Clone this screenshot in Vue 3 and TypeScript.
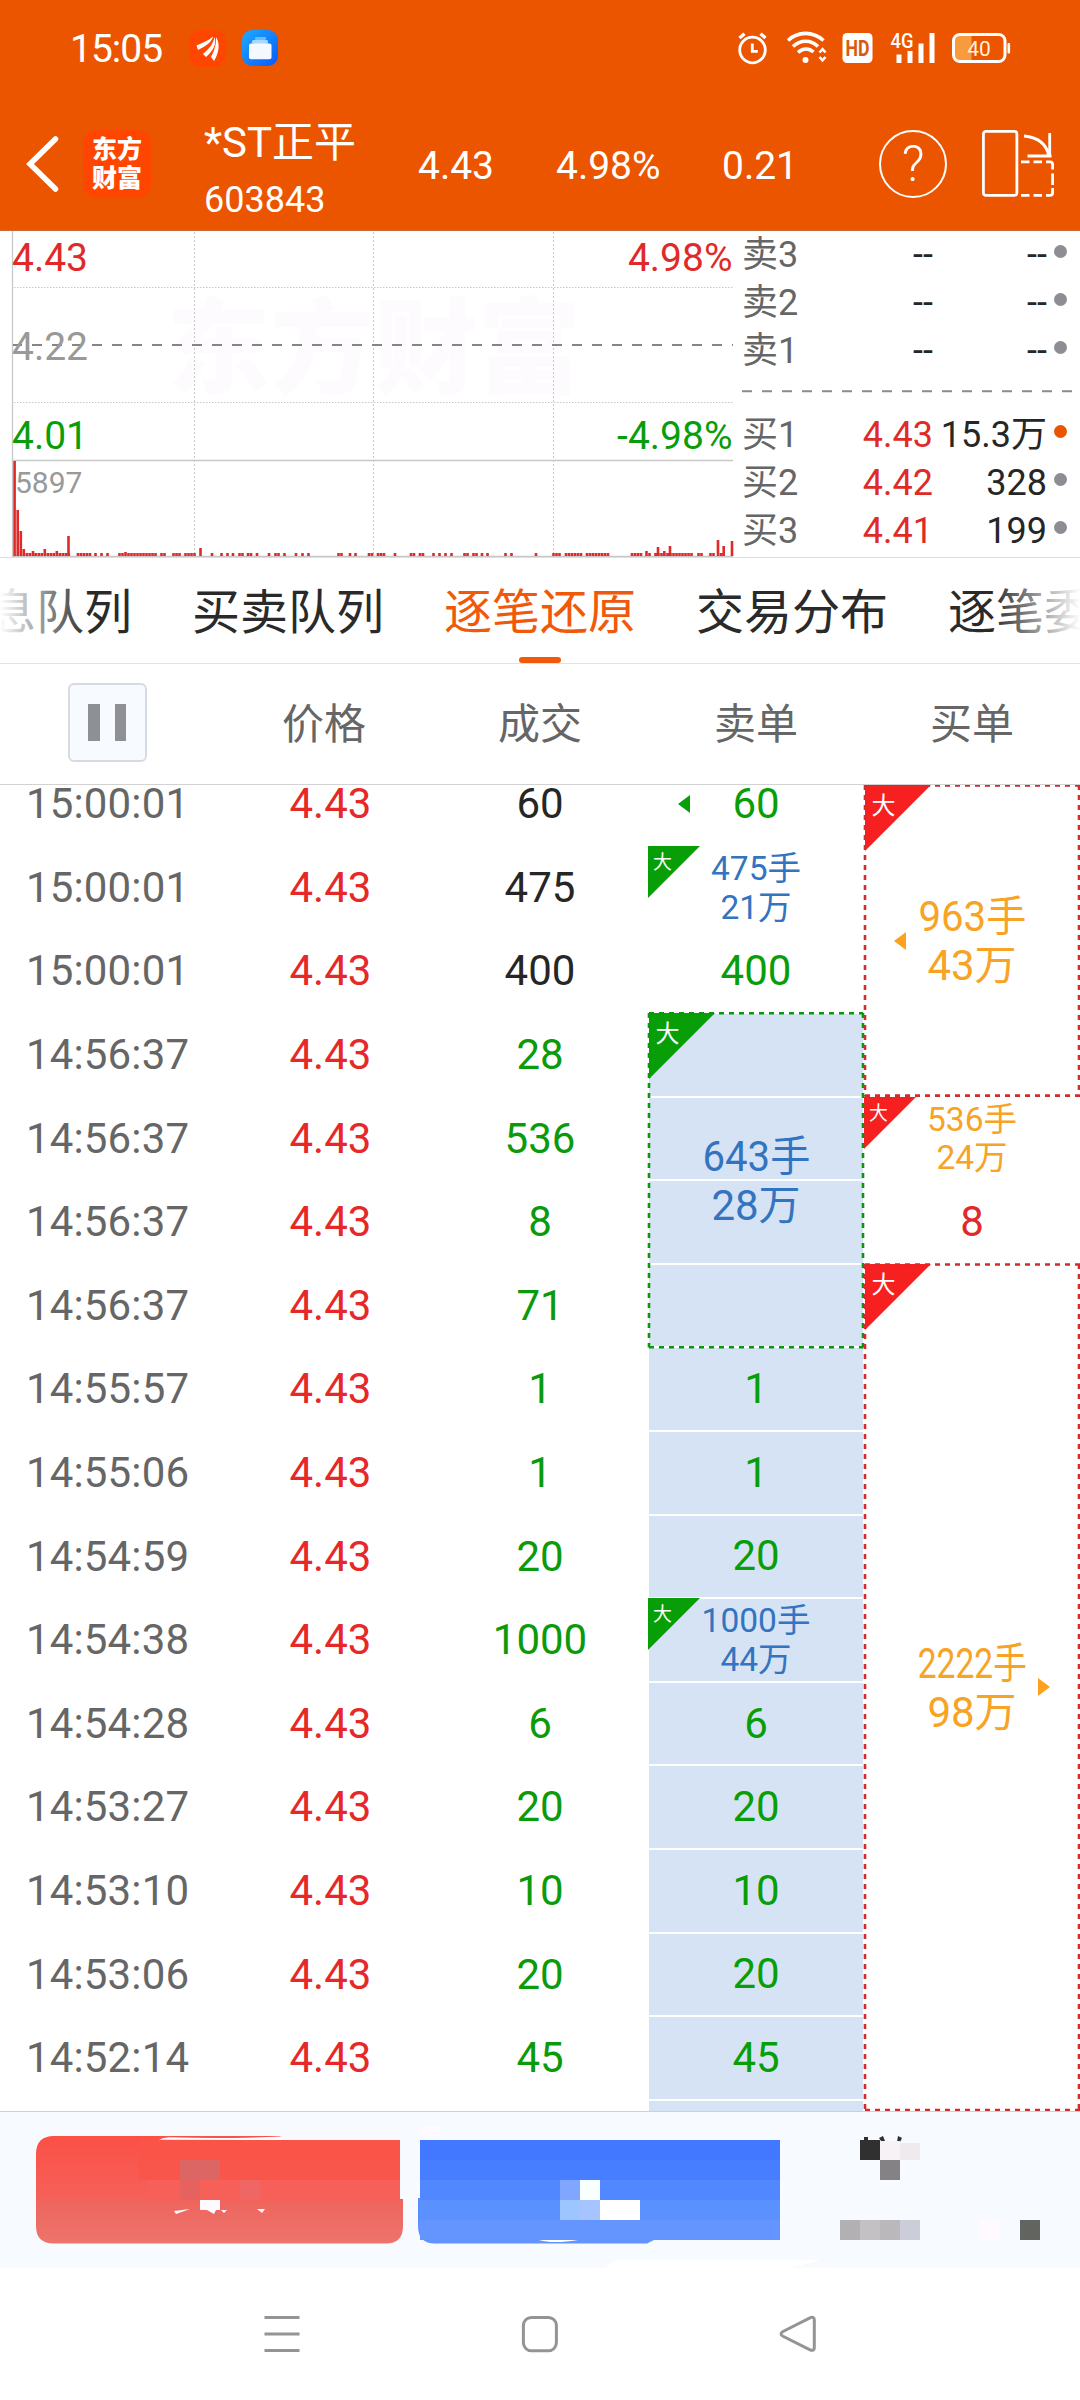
<script setup lang="ts">
type Tone = 'dark' | 'green'
interface Trade { time: string; price: string; volume: string; tone: Tone }
interface Block { span: number; kind: 'plain' | 'big' | 'box' | 'fill'; lots?: string; amount?: string; arrow?: 'left' | 'right'; squeeze?: number }

const ROW = 83.62
const CLIP = 22.9

const quotes = [
  { label: '卖3', price: '--', volume: '--', hot: false },
  { label: '卖2', price: '--', volume: '--', hot: false },
  { label: '卖1', price: '--', volume: '--', hot: false },
  { label: '买1', price: '4.43', volume: '15.3万', hot: true },
  { label: '买2', price: '4.42', volume: '328', hot: false },
  { label: '买3', price: '4.41', volume: '199', hot: false },
]
const asks = quotes.slice(0, 3)
const bids = quotes.slice(3)

const tabs = ['息队列', '买卖队列', '逐笔还原', '交易分布', '逐笔委']
const heads = ['价格', '成交', '卖单', '买单']

const rows: [string, string, Tone][] = [
  ['15:00:01', '60', 'dark'], ['15:00:01', '475', 'dark'], ['15:00:01', '400', 'dark'],
  ['14:56:37', '28', 'green'], ['14:56:37', '536', 'green'], ['14:56:37', '8', 'green'],
  ['14:56:37', '71', 'green'], ['14:55:57', '1', 'green'], ['14:55:06', '1', 'green'],
  ['14:54:59', '20', 'green'], ['14:54:38', '1000', 'green'], ['14:54:28', '6', 'green'],
  ['14:53:27', '20', 'green'], ['14:53:10', '10', 'green'], ['14:53:06', '20', 'green'],
  ['14:52:14', '45', 'green'],
]
const trades: Trade[] = rows.map(([time, volume, tone]) => ({ time, volume, tone, price: '4.43' }))

const sells: Block[] = [
  { span: 1, kind: 'plain', lots: '60', arrow: 'left' },
  { span: 1, kind: 'big', lots: '475手', amount: '21万' },
  { span: 1, kind: 'plain', lots: '400' },
  { span: 4, kind: 'box', lots: '643手', amount: '28万', squeeze: 0.955 },
  { span: 1, kind: 'fill', lots: '1' },
  { span: 1, kind: 'fill', lots: '1' },
  { span: 1, kind: 'fill', lots: '20' },
  { span: 1, kind: 'fill', lots: '1000手', amount: '44万' },
  { span: 1, kind: 'fill', lots: '6' },
  { span: 1, kind: 'fill', lots: '20' },
  { span: 1, kind: 'fill', lots: '10' },
  { span: 1, kind: 'fill', lots: '20' },
  { span: 1, kind: 'fill', lots: '45' },
  { span: 1, kind: 'fill' },
]
const buys = [
  { height: ROW * 4 - CLIP, kind: 'box', lots: '963手', amount: '43万', arrow: 'left', squeeze: 0.955 },
  { height: ROW, kind: 'big', lots: '536手', amount: '24万' },
  { height: ROW, kind: 'plain', lots: '8' },
  { height: 847, kind: 'box', lots: '2222手', amount: '98万', arrow: 'right', squeeze: 0.8 },
]

// Minute volume: [first slot x, last slot x, height]
const runs: [number, number, number][] = [
  [14.6, 14.6, 95], [17.7, 17.7, 46], [20.8, 20.8, 25], [23.8, 23.8, 7], [26.8, 71, 3], [33, 33, 5], [44.8, 44.8, 7], [56.8, 56.8, 5], [68.5, 68.5, 20],
  [78, 90, 3], [95.5, 95.5, 3], [101.5, 101.5, 3], [107.5, 107.5, 3], [119.5, 156, 3], [125.5, 125.5, 4], [161.5, 165, 3],
  [173.5, 180, 3], [185.5, 195, 3], [200.5, 200.5, 8], [212, 212, 3], [221.5, 221.5, 3], [227.5, 227.5, 3],
  [233, 233, 3], [239.5, 243, 3], [248, 251, 3], [257, 257, 3], [269, 269, 3], [275.5, 279, 3], [284.5, 284.5, 3],
  [296, 296, 3], [302.5, 302.5, 3], [308.5, 308.5, 3], [338.5, 341.5, 3], [350, 350, 3], [355.5, 355.5, 3],
  [369, 372, 3], [378, 386, 3], [395, 395, 3], [411, 414, 3], [420, 423, 3], [433.5, 433.5, 3], [439.5, 439.5, 3],
  [445.5, 445.5, 3], [451.5, 451.5, 3], [464.5, 467.5, 3], [473.5, 476.5, 3], [482, 482, 3], [487.5, 487.5, 3],
  [505.5, 505.5, 3], [511.5, 511.5, 3], [536, 536, 3], [553.5, 561, 3], [566, 582, 3], [587, 608, 3],
  [632, 641, 3], [646.5, 646.5, 5], [649.5, 649.5, 3], [655.5, 692, 3], [658, 658, 9], [664.3, 664.3, 5], [670, 670, 10],
  [698.5, 703, 3], [710.5, 716, 3], [718, 718, 16], [721, 721, 3], [723.7, 723.7, 10], [732, 732, 15],
]
const volumePath = runs
  .map(([a, b, h]) => {
    let d = ''
    for (let x = a; x <= b + 0.1; x += 3) d += `M${x.toFixed(1)} ${325 - h}V325`
    return d
  })
  .join('')
</script>

<template>
  <div class="screen">
    <header class="top">
      <div class="status">
        <span class="clock">15:05</span>
        <svg class="app" viewBox="0 0 37 37">
          <rect width="37" height="37" rx="11" fill="#ff4600" />
          <path d="M7.500 15.500C14 12.500 19 11 24 6.500C23 12 17 16 9 20ZM14 24C21 18 24 14 25.500 7C28 14 24 21 17 27ZM22 27C25 21 27.500 15 27 7C31 13 30.500 22 25 31Z" fill="#fff" />
        </svg>
        <svg class="app second" viewBox="0 0 36 36">
          <defs>
            <linearGradient id="blueApp" x1="0" y1="0" x2="1" y2="1">
              <stop offset="0" stop-color="#1cabff" /><stop offset="1" stop-color="#0a59fa" />
            </linearGradient>
          </defs>
          <rect width="36" height="36" rx="10" fill="url(#blueApp)" />
          <rect x="13" y="7" width="11" height="3" rx="1" fill="#64bdff" />
          <rect x="10" y="10" width="16" height="4" rx="1.4" fill="#a8d7ff" />
          <rect x="7" y="13.6" width="22.500" height="15.600" rx="2" fill="#f4f8ff" />
        </svg>
        <svg class="sys" viewBox="0 0 280 40">
          <g fill="none" stroke="#fff">
            <circle cx="18.500" cy="22" r="12.800" stroke-width="2.800" />
            <path d="M5.500 10L10.500 5.700M31.500 10L26.500 5.700" stroke-width="3.400" />
            <path d="M18.300 15.500V23.400H23.800" stroke-width="2.800" />
            <path d="M54 12.500C64 3 79 3 89.500 12.500M59 18.500C66.500 11.500 77 11.500 84 18.500M64 24.500C69 20 75 20 79.500 24" stroke-width="3.600" />
            <path d="M85.500 24.500L88.500 21.200L91.500 24.500M85.500 29L88.500 32.300L91.500 29" stroke-width="2.600" />
          </g>
          <circle cx="71.500" cy="32" r="3" fill="#fff" />
          <rect x="108.500" y="5" width="30" height="30" rx="4.500" fill="#fff" />
          <text x="123.500" y="28" text-anchor="middle" class="hd" textLength="24" lengthAdjust="spacingAndGlyphs">HD</text>
          <text x="156.500" y="20" class="net" textLength="23" lengthAdjust="spacingAndGlyphs">4G</text>
          <path d="M165 26.500V35M176 23V35M187 15.500V35M198 5V35" stroke="#fff" stroke-width="5" />
          <path d="M226 7H237.500V33H226Q221 33 221 28V12Q221 7 226 7Z" fill="#f79b3d" />
          <rect x="219.500" y="6.400" width="51.500" height="27.200" rx="6.500" fill="none" stroke="#fff" stroke-width="3" />
          <rect x="273.500" y="15" width="2.600" height="10.500" rx="1" fill="#fff" />
          <text x="245" y="27.500" text-anchor="middle" class="batt">40</text>
        </svg>
      </div>
      <div class="nav">
        <svg class="back" viewBox="0 0 34 58"><path d="M29.500 4L4 29L29.500 54" fill="none" stroke="#fff" stroke-width="5.500" stroke-linecap="round" /></svg>
        <div class="brand"><span>东方</span><span>财富</span></div>
        <div class="stock"><span class="name">*ST正平</span><span class="code">603843</span></div>
        <span class="q">4.43</span>
        <span class="q">4.98%</span>
        <span class="q">0.21</span>
        <div class="help">?</div>
        <svg class="rotate" viewBox="0 0 74 70" fill="none" stroke="#fff" stroke-width="2.800">
          <rect x="1.400" y="2.400" width="33.500" height="64" rx="2.500" />
          <path d="M42 7Q64 9 67 28M67.700 4V28M45.500 27H69.500" />
          <path d="M39 32.800H47.500M51.500 32.800H60M64 32.800H68Q70.600 32.800 70.600 35.500V40.500M70.600 44.500V56M70.600 59V64Q70.600 66.400 68 66.400H64M60 66.400H51.500M47.500 66.400H39" />
        </svg>
      </div>
    </header>

    <section class="market">
      <div class="chart">
        <svg viewBox="0 0 736 326">
          <text x="374" y="155" text-anchor="middle" class="mark" textLength="414" lengthAdjust="spacingAndGlyphs">东方财富</text>
          <g fill="none" stroke="#c8c8c8" stroke-width="1">
            <path d="M194.500 1V325M373.500 1V325M553.500 1V325" stroke-dasharray="2 2" />
            <path d="M14 56.500H733M14 171.500H733" stroke-dasharray="1.500 1.500" />
            <path d="M12.500 0V325.500H733M12.500 229.500H733" stroke-width="1.300" />
          </g>
          <path d="M13 114H733" stroke="#858585" stroke-width="1.800" stroke-dasharray="10 10" stroke-dashoffset="1" />
          <path :d="volumePath" stroke="#e02a2a" stroke-width="2.600" />
        </svg>
        <div class="scale">
          <span class="up">4.43</span><span class="up">4.98%</span>
          <span class="mid">4.22</span><span></span>
          <span class="down">4.01</span><span class="down">-4.98%</span>
        </div>
        <span class="peak">5897</span>
      </div>
      <div class="book">
        <div v-for="a in asks" :key="a.label" class="level">
          <span class="side">{{ a.label }}</span><span class="none">{{ a.price }}</span><span class="lots">{{ a.volume }}</span><i></i>
        </div>
        <svg class="split" viewBox="0 0 330 35"><path d="M0 16H330" stroke="#8a8a8a" stroke-width="2" stroke-dasharray="10 10" /></svg>
        <div v-for="b in bids" :key="b.label" class="level">
          <span class="side">{{ b.label }}</span><span class="bid">{{ b.price }}</span><span class="lots">{{ b.volume }}</span><i :class="{ hot: b.hot }"></i>
        </div>
      </div>
    </section>

    <nav class="tabs">
      <span v-for="(t, i) in tabs" :key="t" :class="{ active: i === 2 }">{{ t }}</span>
    </nav>

    <div class="heads">
      <div class="cell"><div class="pause"><i></i><i></i></div></div>
      <div v-for="h in heads" :key="h" class="cell">{{ h }}</div>
    </div>

    <main class="table">
      <div class="trades">
        <div v-for="(t, i) in trades" :key="i" class="trade">
          <span class="time">{{ t.time }}</span><span class="price">{{ t.price }}</span><span :class="['vol', t.tone]">{{ t.volume }}</span>
        </div>
      </div>
      <div class="orders sell">
        <div v-for="(s, i) in sells" :key="i" :class="['block', s.kind]" :style="{ height: s.span * ROW + 'px' }">
          <div v-if="s.kind === 'box'" class="stripes"><i v-for="n in s.span" :key="n"></i></div>
          <svg v-if="s.kind === 'box'" class="frame" width="216" :height="s.span * ROW" fill="none" stroke="currentColor" stroke-width="2.600" stroke-dasharray="5 5">
            <path :d="`M1 .3H215M1 ${s.span * ROW - .3}H215`" /><path :d="`M1 0V${s.span * ROW}M215 0V${s.span * ROW}`" />
          </svg>
          <svg v-if="s.amount" :class="['flag', { small: s.kind !== 'box' }]" viewBox="0 0 66 66"><path d="M0 0H66L0 66Z" fill="currentColor" /><text x="6.500" y="29">大</text></svg>
          <svg v-if="s.arrow" class="arrow l30" viewBox="0 0 12 18"><path d="M0 9L12 0V18Z" fill="currentColor" /></svg>
          <div :class="['label', { pair: s.amount, compact: s.amount && s.kind !== 'box' }]">
            <span :style="{ transform: s.squeeze ? `scaleX(${s.squeeze})` : undefined }">{{ s.lots }}</span>
            <span v-if="s.amount">{{ s.amount }}</span>
          </div>
        </div>
      </div>
      <div class="orders buy">
        <div v-for="(b, i) in buys" :key="i" :class="['block', b.kind]" :style="{ height: b.height + 'px' }">
          <svg v-if="b.kind === 'box'" class="frame" width="216" :height="b.height" fill="none" stroke="currentColor" stroke-width="2.600" stroke-dasharray="5 5">
            <path :d="`M1 .5H216M1 ${b.height - 1}H216`" /><path :d="`M1 0V${b.height}M215 0V${b.height}`" />
          </svg>
          <svg v-if="b.amount" :class="['flag', { small: b.kind !== 'box' }]" viewBox="0 0 66 66"><path d="M0 0H66L0 66Z" fill="currentColor" /><text x="6.500" y="29">大</text></svg>
          <svg v-if="b.arrow" :class="['arrow', b.arrow]" viewBox="0 0 12 18"><path :d="b.arrow === 'left' ? 'M0 9L12 0V18Z' : 'M12 9L0 0V18Z'" fill="currentColor" /></svg>
          <div :class="['label', { pair: b.amount, compact: b.amount && b.kind !== 'box' }]">
            <span :style="{ transform: b.squeeze ? `scaleX(${b.squeeze})` : undefined }">{{ b.lots }}</span>
            <span v-if="b.amount">{{ b.amount }}</span>
          </div>
        </div>
      </div>
    </main>

    <footer class="actions">
      <svg viewBox="0 0 1080 156">
        <defs>
          <linearGradient id="red" x1="0" y1="0" x2="0" y2="1">
            <stop offset="0" stop-color="#fb5046" /><stop offset=".55" stop-color="#f66058" />
            <stop offset=".65" stop-color="#ed675f" /><stop offset="1" stop-color="#ee746c" />
          </linearGradient>
        </defs>
        <path d="M54 24H282L270 28H400V87H403V114Q403 131.600 386 131.600H54Q36 131.600 36 114V42Q36 24 54 24Z" fill="url(#red)" />
        <path d="M140 28H400V48H140Z" fill="#fa5348" /><path d="M138 48H400V68H138Z" fill="#f9564b" /><path d="M146 68H400V88H150Z" fill="#f75f59" />
        <path d="M159 27.800Q163 25.200 169 25.200Q220 27 282 24.600V28Z" fill="#fff" />
        <path d="M180 48H220V68H180Z" fill="#dc6664" /><path d="M180 68H200V88H180Z" fill="#e5625e" /><path d="M240 68H260V88H240Z" fill="#ef6665" />
        <path d="M200 88H220V98H216L214 102L207 98H200ZM174 99L190 97L176 102ZM221 98L227 98L224 101ZM257 97H265L262 101Z" fill="#fffaff" />
        <path d="M420 14H440V23H420Z" fill="#fefaff" />
        <path d="M418 86H430V128H654L647 131.600H435Q418 131.600 418 114Z" fill="#6394fd" />
        <path d="M418 86H470V110H418Z" fill="#5a8dfd" />
        <path d="M420 28H780V48H420Z" fill="#4277ff" /><path d="M420 48H780V68H420Z" fill="#477eff" />
        <path d="M420 68H780V88H420Z" fill="#5188ff" /><path d="M420 88H780V108H420Z" fill="#5b90ff" /><path d="M420 108H780V128H420Z" fill="#6495ff" />
        <path d="M539 128H578Q553 132 539 128Z" fill="#fff" />
        <path d="M560 68H580V88H560Z" fill="#80a6ff" /><path d="M580 68H600V88H580Z" fill="#f8ffff" />
        <path d="M560 88H580V108H560Z" fill="#9dc5ff" /><path d="M580 88H600V108H580Z" fill="#a6c4ff" /><path d="M600 88H640V108H600Z" fill="#fff" />
        <path d="M616 148H822L790 156H605Z" fill="#fff" />
        <path d="M864 25H868V28H864ZM879 26L883 24L885 29H881ZM898 24L902 26L900 30H897Z" fill="#303030" />
        <path d="M860 28H880V48H860Z" fill="#303030" /><path d="M880 29H900V48H880Z" fill="#f7f2f6" /><path d="M900 31H920V48H900Z" fill="#efeaee" />
        <path d="M880 48H900V68H880Z" fill="#848285" />
        <path d="M840 108H860V128H840Z" fill="#b3b0b4" /><path d="M860 108H880V128H860Z" fill="#c4c1c4" /><path d="M880 108H900V128H880Z" fill="#bbb8bb" />
        <path d="M900 108H920V128H900Z" fill="#cdcdd9" /><path d="M980 108H1000V128H980Z" fill="#fffaff" /><path d="M1020 108H1040V128H1020Z" fill="#61645f" />
      </svg>
    </footer>

    <div class="system">
      <svg viewBox="0 0 40 40"><path d="M3.500 3.500H38.500M3.500 20H38.500M3.500 36.500H38.500" /></svg>
      <svg viewBox="0 0 40 40"><rect x="4.400" y="3.400" width="33" height="33.400" rx="8" /></svg>
      <svg viewBox="0 0 40 40"><path d="M33.500 3.700L6 17.500Q2 20 6 22.300L33.500 36Q37.300 37.300 37.300 33.500V6Q37.300 2.400 33.500 3.700Z" /></svg>
    </div>
  </div>
</template>

<style>
body { margin: 0; background: #fff; }
</style>

<style scoped>
.screen { width: 1080px; height: 2400px; overflow: hidden; background: #fff; font-family: Roboto, "Noto Sans CJK SC", sans-serif; display: flex; flex-direction: column; }
.screen > * { flex: none; box-sizing: border-box; }
svg { display: block; }
.top { height: 231px; background: #ec5500; color: #fff; border-bottom: 1px solid #c96a35; }
.status { height: 96px; display: flex; align-items: center; padding-left: 70px; }
.clock { width: 119px; font-size: 39px; line-height: 50px; letter-spacing: -1px; padding-top: 1px; }
.app { width: 37px; height: 37px; }
.second { width: 36px; height: 36px; margin-left: 15.500px; }
.sys { width: 280px; height: 40px; margin-left: 456.500px; }
.hd { font: 700 22px Roboto; fill: #d85a10; }
.net { font: 500 20px Roboto; fill: #fff; }
.batt { font: 400 21px Roboto; fill: #fff3dc; }
.nav { height: 135px; display: grid; grid-template-columns: 58px 120px 214px 138px 166px 157px 103px 80px; padding-left: 26px; align-items: center; }
.back { width: 34px; height: 58px; }
.brand { width: 68px; height: 68px; margin-left: -1px; border-radius: 14px; background: #ff4600; display: flex; flex-direction: column; justify-content: center; align-items: center; font-size: 25px; font-weight: 900; line-height: 29px; }
.stock { display: flex; flex-direction: column; padding-top: 16px; }
.name { font-size: 42px; line-height: 58px; }
.code { font-size: 36px; line-height: 57px; }
.q { font-size: 39px; line-height: 50px; padding-top: 5px; }
.help { width: 64px; height: 64px; border: 2.800px solid #fff; border-radius: 50%; font-size: 50px; font-weight: 300; line-height: 65px; text-align: center; }
.rotate { width: 74px; height: 70px; }

.market { height: 327px; display: flex; border-bottom: 1px solid #dedede; }
.chart { width: 736px; height: 326px; position: relative; }
.chart svg { position: absolute; inset: 0; width: 736px; height: 326px; }
.mark { font: 900 104px "Noto Sans CJK SC"; fill: #fefbfe; }
.scale { position: relative; display: grid; grid-template-columns: auto auto; justify-content: space-between; padding: 0 3.500px 0 12px; font-size: 39px; line-height: 89.200px; margin-top: -17px; }
.scale span:nth-child(2n) { text-align: right; }
.up { color: #e02a2a; }
.mid { color: #999; }
.down { color: #0a9d0a; }
.peak { position: relative; display: block; margin: -19px 0 0 15px; font-size: 30px; line-height: 40px; color: #999; }
.book { width: 330px; margin-left: 6px; }
.level { height: 48px; display: flex; align-items: center; font-size: 36px; line-height: 48px; }
.side { width: 90px; color: #666; }
.none, .bid { width: 101px; text-align: right; }
.none, .lots { color: #262626; }
.bid { color: #e02a2a; }
.lots { width: 114px; text-align: right; white-space: nowrap; }
.level i { width: 13px; height: 13px; border-radius: 50%; background: #8e8d94; margin: -7px 0 0 7px; }
.level i.hot { background: #ec5500; }
.split { width: 330px; height: 35.500px; }

.tabs { height: 106px; border-bottom: 1px solid #e2e2e2; display: flex; gap: 60px; position: relative; overflow: hidden; font-size: 48px; line-height: 110px; color: #2a2a2a; white-space: nowrap; }
.tabs span:first-child { margin-left: -12px; }
.tabs .active { color: #f1590a; position: relative; }
.tabs .active::after { content: ""; position: absolute; left: 75px; bottom: 0; width: 42px; height: 6px; border-radius: 3px; background: #f1590a; }
.tabs::after { content: ""; position: absolute; inset: 0; background: linear-gradient(90deg, #fff 0, rgba(255,255,255,0) 88px, rgba(255,255,255,0) 992px, #fff 1080px); }
.heads { height: 121px; border-bottom: 1px solid #d2d2d2; display: flex; color: #666; font-size: 42px; line-height: 121px; }
.cell { width: 216px; text-align: center; display: flex; justify-content: center; align-items: center; }
.pause { width: 75px; height: 75px; margin: -3px 2px 0 0; border: 2.500px solid #d8dae2; border-radius: 6px; background: #f7faff; display: flex; align-items: center; justify-content: center; gap: 15px; }
.pause i { width: 11.500px; height: 37px; background: #8e9095; }

.table { height: 1327px; display: flex; overflow: hidden; border-bottom: 1px solid #d0d0d0; font-size: 42px; }
.trades, .sell { margin-top: -22.900px; }
.trades { width: 648px; }
.trade { height: 83.620px; line-height: 84.600px; display: flex; }
.time { width: 263.500px; box-sizing: border-box; padding-left: 26px; color: #666; letter-spacing: .15px; }
.price { width: 168.500px; box-sizing: border-box; padding-left: 26px; color: #e62828; }
.vol { width: 216px; text-align: center; line-height: 83.620px; }
.dark { color: #262626; }
.green { color: #0b9a0b; }
.orders { width: 216px; }
.sell { color: #079e07; }
.buy { color: #f72020; }
.block { position: relative; display: flex; align-items: center; justify-content: center; }
.fill { background: linear-gradient(#d6e3f5, #d6e3f5) 1px 1px / 214px calc(100% - 2px) no-repeat; }
.stripes { position: absolute; inset: 0 1px; display: flex; flex-direction: column; }
.stripes i { flex: 1; background: #d6e3f5; border: solid #fff; border-width: 1px 0; }
.frame { position: absolute; inset: 0; overflow: visible; z-index: 1; }
.sell .frame { color: #079a07; }
.buy .frame { color: #d22c2c; }
.flag { position: absolute; left: 1px; top: 0; width: 66px; height: 66px; }
.flag.small { left: 0; width: 52px; height: 52px; }
.flag text { font: 400 24px "Noto Sans CJK SC"; fill: #fff; }
.arrow { position: absolute; width: 12px; height: 18px; top: calc(50% - 9px); }
.l30 { left: 30px; }
.left { left: 30px; color: #ffa01e; }
.right { left: 174px; color: #ffa01e; }
.label { position: relative; display: flex; flex-direction: column; align-items: center; line-height: 50px; white-space: nowrap; }
.label.pair { line-height: 49px; padding-top: 1px; }
.sell .pair { color: #3374c0; }
.buy .pair { color: #f7a325; }
.buy .label { color: #e02a2a; }
.buy .label.pair { color: #f7a325; }
.label.compact { font-size: 33.500px; line-height: 38.700px; padding-top: 2px; }

.actions { height: 156px; background: #f7faff; }
.actions svg { width: 1080px; height: 156px; }
.system { height: 132px; display: flex; padding: 46px 0 0 261px; gap: 218px; }
.system svg { width: 40px; height: 40px; fill: none; stroke: #949494; stroke-width: 3; }
</style>
